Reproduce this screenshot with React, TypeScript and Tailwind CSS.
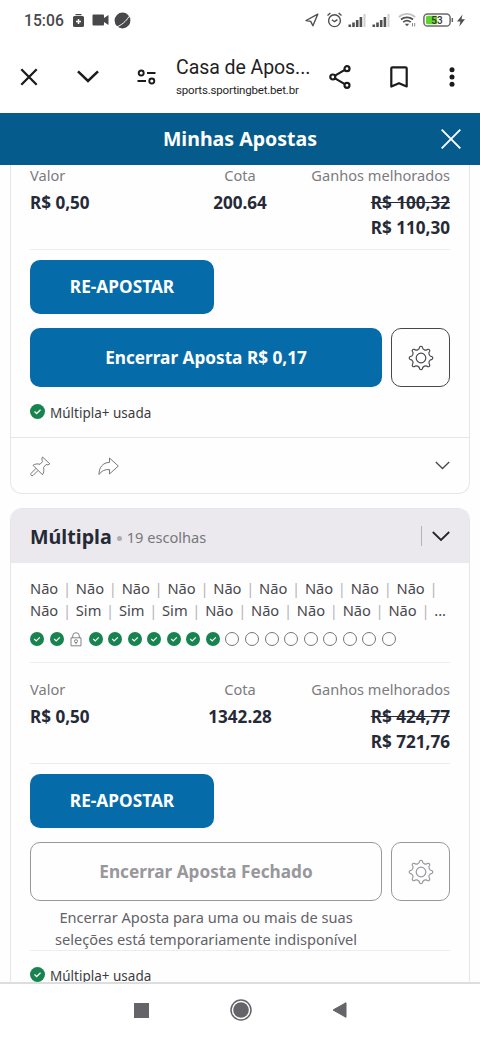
import type { ReactNode } from 'react'

const CHOICES = [
  ['Não', 'Não', 'Não', 'Não', 'Não', 'Não', 'Não', 'Não', 'Não'],
  ['Não', 'Sim', 'Sim', 'Sim', 'Não', 'Não', 'Não', 'Não', 'Não'],
]

const LEGS = [
  'won', 'won', 'locked', 'won', 'won', 'won', 'won', 'won', 'won', 'won',
  'open', 'open', 'open', 'open', 'open', 'open', 'open', 'open', 'open',
]

function StatusBar() {
  return (
    <div className="flex h-[40px] items-center pl-[24px] pr-[15px] text-[#48484a]">
      <span className="w-[49px] pt-px font-[Roboto] text-[15.700px] font-medium leading-[20px]">15:06</span>
      <svg width="11" height="13" viewBox="0 0 11 13">
        <path d="M2.500 0h6v1.200h-6z M1.500 2h8A1.500 1.500 0 0 1 11 3.500v8A1.500 1.500 0 0 1 9.500 13h-8A1.500 1.500 0 0 1 0 11.500v-8A1.500 1.500 0 0 1 1.500 2z" fill="#48484a" />
        <path d="M5.500 5v5M3 7.500h5" stroke="#fff" strokeWidth="1.500" />
      </svg>
      <svg width="17" height="12" viewBox="0 0 17 12" className="ml-[8px]">
        <path d="M1.500.5h9.500a1 1 0 0 1 1 1V4l4.500-3v10L12 8v2.500a1 1 0 0 1-1 1H1.500a1 1 0 0 1-1-1v-9a1 1 0 0 1 1-1z" fill="#48484a" />
      </svg>
      <svg width="17" height="17" viewBox="0 0 17 17" className="ml-[5px]">
        <circle cx="8.500" cy="8.500" r="7.900" fill="#48484a" />
        <path d="M2.500 15C7 13.500 12 9.500 15 4.500" fill="none" stroke="#fff" strokeWidth="1" />
      </svg>

      <div className="ml-auto flex items-center">
        <svg width="14" height="14" viewBox="0 0 14 14" fill="none" stroke="#505052" strokeWidth="1.400" strokeLinejoin="round">
          <path d="M12.800 1.200L1 7.500l4.700.9 2.200 4.400z" />
        </svg>
        <svg width="17" height="16" viewBox="0 0 17 16" fill="none" stroke="#505052" strokeWidth="1.400" className="ml-[7px]">
          <circle cx="8.500" cy="8.700" r="5.900" />
          <path d="M1.500 3.600L4.400 1M15.500 3.600L12.600 1M5.900 7.700l2.600 2 2.900-2" />
        </svg>
        <SignalBars className="ml-[5px]" />
        <SignalBars className="ml-[6px]" />
        <svg width="18" height="14" viewBox="0 0 18 14" fill="none" strokeWidth="1.800" className="ml-[8px]">
          <path d="M0.800 4C5.500-.2 12.500-.2 17.200 4" stroke="#c4c4c6" />
          <path d="M3 6.500c3.500-2.800 8.500-2.800 12 0M5.200 9.100c2.300-1.700 5.300-1.700 7.600 0" stroke="#505052" />
          <path d="M6.800 10.800h4.400L9 13.300z" fill="#505052" />
          <path d="M14.500 10v3.500M16.700 10v3.500" stroke="#8a8a8c" strokeWidth="1" />
        </svg>
        <svg width="31" height="14" viewBox="0 0 31 14" className="ml-[7px]">
          <rect x="0.900" y="0.900" width="26.200" height="12.200" rx="3.600" fill="#fff" stroke="#69696b" strokeWidth="1.500" />
          <path d="M4.500 2.800H14v8.400H4.500A1.500 1.500 0 0 1 3 9.700V4.300a1.500 1.500 0 0 1 1.500-1.500z" fill="#5fd42c" />
          <path d="M29.300 5v4" stroke="#69696b" strokeWidth="1.500" />
          <text x="14" y="10.800" textAnchor="middle" fontFamily="Roboto" fontSize="10" fontWeight="500" fill="#343436">53</text>
        </svg>
        <svg width="8" height="13" viewBox="0 0 8 13" className="ml-[3px]">
          <path d="M5.500.5L0 7.500h3.400L2.300 12.500 8 5.300H4.500z" fill="#505052" />
        </svg>
      </div>
    </div>
  )
}

function SignalBars({ className }: { className: string }) {
  return (
    <svg width="18" height="13" viewBox="0 0 18 13" className={className}>
      <path d="M0.500 10.500h2.600V13H.5zM4.200 8.500h2.600V13H4.200zM7.900 6h2.600v7H7.900zM11.600 3h2.600v10h-2.600z" fill="#505052" />
      <path d="M15.500 0h2v13h-2z" fill="#cfcfd1" />
    </svg>
  )
}

function BrowserBar() {
  return (
    <div className="flex h-[73px] items-center text-[#1f1f1f]">
      <svg width="18" height="18" viewBox="0 0 18 18" fill="none" stroke="#1b1b1b" strokeWidth="2.300" className="ml-[20px]">
        <path d="M1.300 1.300l15.400 15.400M16.700 1.300L1.300 16.700" />
      </svg>
      <svg width="22" height="13" viewBox="0 0 22 13" fill="none" stroke="#1b1b1b" strokeWidth="2.500" className="ml-[39px]">
        <path d="M1 1.300l10 9.700 10-9.700" />
      </svg>
      <svg width="19" height="16" viewBox="0 0 19 16" fill="none" stroke="#1b1b1b" strokeWidth="1.900" className="ml-[38px]">
        <circle cx="4.200" cy="4" r="2.500" />
        <circle cx="14.800" cy="12" r="2.500" />
        <path d="M10 4h8.500M0.500 12H9" />
      </svg>
      <div className="ml-[20px] w-[140px] font-[Roboto]">
        <p className="pt-px text-[19.500px] leading-[24px] whitespace-nowrap tracking-[-0.060px]">Casa de Apos...</p>
        <p className="mt-[2px] text-[11.500px] leading-[16px] whitespace-nowrap tracking-[-0.190px]">sports.sportingbet.bet.br</p>
      </div>
      <svg width="24" height="26" viewBox="0 0 24 26" fill="none" stroke="#1b1b1b" strokeWidth="2.200" className="ml-[12px]">
        <circle cx="4.800" cy="13" r="2.500" />
        <circle cx="19" cy="4.700" r="2.500" />
        <circle cx="19" cy="21.300" r="2.500" />
        <path d="M7 11.600l9.800-5.700M7 14.400l9.800 5.700" />
      </svg>
      <svg width="18" height="22" viewBox="0 0 18 22" fill="none" stroke="#1b1b1b" strokeWidth="2.200" strokeLinejoin="round" className="ml-[38px]">
        <path d="M1.300 20.500V2.500a1.200 1.200 0 0 1 1.200-1.200h13a1.200 1.200 0 0 1 1.200 1.200v18L9 17.200z" />
      </svg>
      <svg width="6" height="20" viewBox="0 0 6 20" fill="#1b1b1b" className="ml-[41px]">
        <circle cx="3" cy="2.700" r="2.500" />
        <circle cx="3" cy="10" r="2.500" />
        <circle cx="3" cy="17.300" r="2.500" />
      </svg>
    </div>
  )
}

function WonIcon({ size }: { size: number }) {
  return (
    <svg width={size} height={size} viewBox="0 0 14 14" className="shrink-0">
      <circle cx="7" cy="7" r="7" fill="#17834f" />
      <path d="M4.200 7l2 1.900 3.600-3.500" fill="none" stroke="#fff" strokeWidth="1.200" />
    </svg>
  )
}

function LockIcon() {
  return (
    <svg width="14" height="15" viewBox="0 0 14 15" fill="none" stroke="#77777b" strokeWidth="0.900" className="shrink-0">
      <path d="M2 5.800h10v8H2zM3.700 5.800V4a3.300 3.300 0 0 1 6.600 0v1.800" />
      <circle cx="7" cy="9.200" r="1.500" />
      <path d="M7 10.700v1.500" />
    </svg>
  )
}

function GearIcon() {
  return (
    <svg width="26" height="26" viewBox="-13 -13 26 26" fill="none" stroke="currentColor" strokeWidth="1.200">
      <path d="M-1.300-11A1.500 1.500 0 0 1 1.300-11A3.400 3.400 0 0 0 6.860-8.700A1.500 1.500 0 0 1 8.700-6.860A3.400 3.400 0 0 0 11-1.300A1.500 1.500 0 0 1 11 1.300A3.400 3.400 0 0 0 8.700 6.860A1.500 1.500 0 0 1 6.860 8.700A3.400 3.400 0 0 0 1.300 11A1.500 1.500 0 0 1-1.300 11A3.400 3.400 0 0 0-6.860 8.700A1.500 1.500 0 0 1-8.700 6.860A3.400 3.400 0 0 0-11 1.300A1.500 1.500 0 0 1-11-1.300A3.400 3.400 0 0 0-8.700-6.860A1.500 1.500 0 0 1-6.860-8.700A3.400 3.400 0 0 0-1.300-11z" />
      <circle r="4.800" />
    </svg>
  )
}

interface BetBodyProps {
  odds: string
  oldWin: string
  newWin: string
  closed?: boolean
  children: ReactNode
}

function BetBody({ odds, oldWin, newWin, closed, children }: BetBodyProps) {
  return (
    <>
      <div className="grid h-[86px] grid-cols-3 border-b border-[#ededf0] text-[17.1px] font-bold leading-[24.400px] text-[#252a36]">
        <div>
          <p className="mb-[5.400px] text-[14.600px] font-normal leading-[22px] text-[#7b7b80]">Valor</p>
          <p>R$ 0,50</p>
        </div>
        <div className="text-center">
          <p className="mb-[5.400px] text-[14.600px] font-normal leading-[22px] text-[#7b7b80]">Cota</p>
          <p>{odds}</p>
        </div>
        <div className="text-right whitespace-nowrap">
          <p className="mb-[5.400px] text-[14.600px] font-normal leading-[22px] text-[#7b7b80]">Ganhos melhorados</p>
          <p className="line-through">{oldWin}</p>
          <p>{newWin}</p>
        </div>
      </div>
      <button className="mt-[10px] block h-[54px] w-[184px] rounded-[10px] bg-[#066ca9] text-[17.250px] font-bold text-white">
        RE-APOSTAR
      </button>
      <div className={closed ? 'mt-[14px] flex gap-[9px] text-[#98979c]' : 'mt-[14px] flex gap-[9px] text-[#48484c]'}>
        <button
          className={
            closed
              ? 'h-[59px] w-[352px] rounded-[10px] border border-[#98979c] text-[17.200px] font-bold'
              : 'h-[59px] w-[352px] rounded-[10px] bg-[#066ca9] text-[17.200px] font-bold text-white'
          }
        >
          {children}
        </button>
        <button className="flex h-[59px] w-[59px] items-center justify-center rounded-[10px] border border-current">
          <GearIcon />
        </button>
      </div>
    </>
  )
}

function ComboUsed() {
  return (
    <div className="flex">
      <WonIcon size={15} />
      <span className="ml-[5px] text-[13.500px] leading-[18px] text-[#3c3c40]">Múltipla+ usada</span>
    </div>
  )
}

function Chevron({ w, color, stroke }: { w: number; color: string; stroke: number }) {
  return (
    <svg width={w} height={w / 2 + 2} viewBox={`0 0 ${w} ${w / 2 + 2}`} fill="none" stroke={color} strokeWidth={stroke}>
      <path d={`M0.800 1l${w / 2 - 0.8} ${w / 2 - 1} ${w / 2 - 0.8}-${w / 2 - 1}`} />
    </svg>
  )
}

export default function App() {
  return (
    <div className="flex h-[1040px] w-[480px] flex-col overflow-hidden bg-white font-['Noto_Sans',sans-serif]">
      <StatusBar />
      <BrowserBar />

      <header className="grid h-[52px] shrink-0 grid-cols-[50px_1fr_50px] items-center bg-[#045b8c] text-white">
        <h1 className="col-start-2 text-center text-[19.550px] font-bold">Minhas Apostas</h1>
        <svg width="20" height="20" viewBox="0 0 20 20" fill="none" stroke="#fff" strokeWidth="1.900" className="ml-[11px]">
          <path d="M0.700 0.700l18.600 18.600M19.300 0.700L0.700 19.300" />
        </svg>
      </header>

      <main className="flex h-[817px] shrink-0 flex-col overflow-hidden bg-[#fefefe] px-[10px]">
        {/* first bet, scrolled partly under the header */}
        <section className="h-[329px] shrink-0 rounded-b-[12px] border border-t-0 border-[#e6e5ea]">
          <div className="h-[273px] px-[19px]">
            <div className="-mt-px">
              <BetBody odds="200.64" oldWin="R$ 100,32" newWin="R$ 110,30">
                Encerrar Aposta R$ 0,17
              </BetBody>
            </div>
            <div className="mt-[17px]">
              <ComboUsed />
            </div>
          </div>
          <div className="flex h-[55px] items-center border-t border-[#e6e5ea] pl-[19px] pr-[19px] pt-[2px]">
            <svg width="21" height="21" viewBox="0 0 21 21" fill="none" stroke="#77777b" strokeWidth="1" strokeLinejoin="round">
              <path d="M12.500 1l7.300 6.800c-1 1.200-2.500 1.200-3.700.7l-2.600 3c.7 2.700.3 5.300-1 7.300L3 9.300c2-1.500 4.500-1.700 7-1l2.600-2.800C11.800 4 11.600 2.200 12.500 1z" />
              <path d="M6 12.300l-5 5.200c-.8 1.500.7 2.800 2 2l5-5" />
            </svg>
            <svg width="21" height="19" viewBox="0 0 21 19" fill="none" stroke="#77777b" strokeWidth="1" strokeLinejoin="round" className="ml-[47px]">
              <path d="M11.500 1l8.800 8-8.800 8v-4.500C6.500 12.300 3.500 14 1 17.500 1 10.500 4.500 5.800 11.500 5.300z" />
            </svg>
            <span className="ml-auto">
              <Chevron w={15} color="#4c4c50" stroke={1.4} />
            </span>
          </div>
        </section>

        <section className="mt-[14px] h-[500px] shrink-0 rounded-t-[12px] border border-b-0 border-[#e6e5ea]">
          <div className="flex h-[54px] items-center rounded-t-[11px] bg-[#ebe9ed] px-[19px]">
            <h2 className="pt-px text-[19.700px] font-bold text-[#252a36]">Múltipla</h2>
            <span className="ml-[5px] mt-[4px] h-[5px] w-[5px] rounded-full bg-[#adadb0]" />
            <span className="ml-[5px] mt-[3px] text-[14.600px] text-[#77777b]">19 escolhas</span>
            <span className="ml-auto mr-[10px] h-[20px] w-px bg-[#b3b2b6]" />
            <Chevron w={18} color="#252528" stroke={1.8} />
          </div>

          <div className="px-[19px] pt-[14px]">
            {CHOICES.map((row, i) => (
              <div key={i} className="flex h-[22px] text-[14.670px] leading-[22px] text-[#48484c]">
                {row.map((choice, j) => (
                  <span key={j}>
                    {choice}
                    <span className="mx-[4.750px] text-[#b5b4b9]">|</span>
                  </span>
                ))}
                {i === 1 && <span>...</span>}
              </div>
            ))}

            <div className="mt-[11px] flex h-[31px] items-start gap-[5.550px] border-b border-[#ededf0]">
              {LEGS.map((leg, i) => {
                if (leg === 'won') return <WonIcon key={i} size={14} />
                if (leg === 'locked') return <LockIcon key={i} />
                return <span key={i} className="h-[14px] w-[14px] shrink-0 rounded-full border border-[#77777b]" />
              })}
            </div>

            <div className="mt-[15px]">
              <BetBody odds="1342.28" oldWin="R$ 424,77" newWin="R$ 721,76" closed>
                Encerrar Aposta Fechado
              </BetBody>
            </div>
            <div className="border-b border-[#ededf0] pt-[5px]">
              <p className="w-[352px] text-center text-[14.600px] leading-[22px] text-[#626267]">
                Encerrar Aposta para uma ou mais de suas
                <br />
                seleções está temporariamente indisponível
              </p>
            </div>
            <div className="mt-[16px]">
              <ComboUsed />
            </div>
          </div>
        </section>
      </main>

      <nav className="flex h-[58px] shrink-0 items-center border-t-2 border-[#dddde0] pb-[4px] pl-[134px]">
        <span className="h-[15px] w-[15px] bg-[#656468]" />
        <svg width="22" height="22" viewBox="0 0 22 22" className="ml-[81px]">
          <circle cx="11" cy="11" r="10" fill="none" stroke="#656468" strokeWidth="1.500" />
          <circle cx="11" cy="11" r="7.800" fill="#656468" />
        </svg>
        <svg width="15" height="16" viewBox="0 0 15 16" className="ml-[80px]">
          <path d="M14 0.700v14.600L1 8z" fill="#656468" stroke="#656468" strokeLinejoin="round" />
        </svg>
      </nav>
    </div>
  )
}
